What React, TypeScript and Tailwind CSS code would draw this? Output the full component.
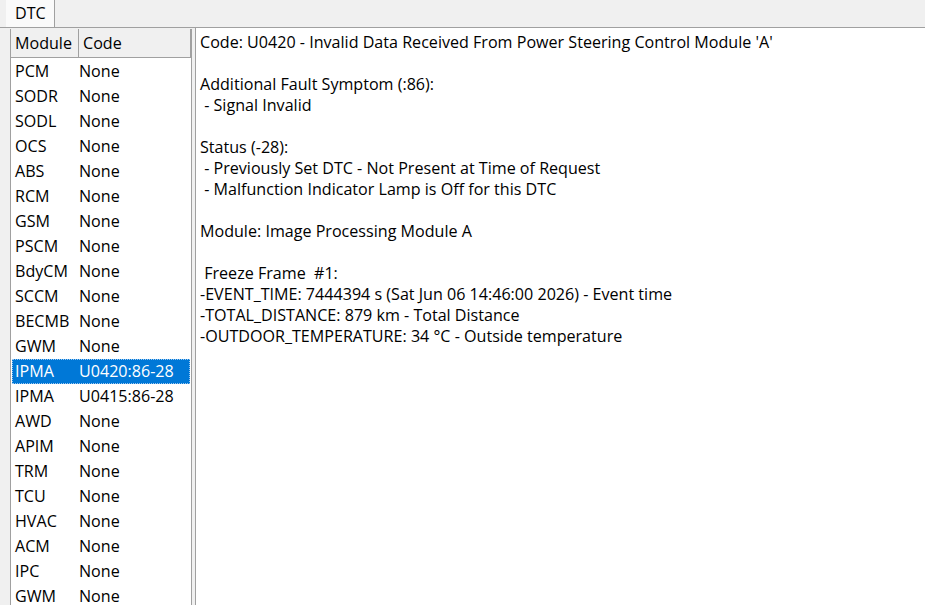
import React from 'react';

const rows: [string, string][] = [
  ['PCM', 'None'],
  ['SODR', 'None'],
  ['SODL', 'None'],
  ['OCS', 'None'],
  ['ABS', 'None'],
  ['RCM', 'None'],
  ['GSM', 'None'],
  ['PSCM', 'None'],
  ['BdyCM', 'None'],
  ['SCCM', 'None'],
  ['BECMB', 'None'],
  ['GWM', 'None'],
  ['IPMA', 'U0420:86-28'],
  ['IPMA', 'U0415:86-28'],
  ['AWD', 'None'],
  ['APIM', 'None'],
  ['TRM', 'None'],
  ['TCU', 'None'],
  ['HVAC', 'None'],
  ['ACM', 'None'],
  ['IPC', 'None'],
  ['GWM', 'None'],
];

const details = `Code: U0420 - Invalid Data Received From Power Steering Control Module 'A'

Additional Fault Symptom (:86):
 - Signal Invalid

Status (-28):
 - Previously Set DTC - Not Present at Time of Request
 - Malfunction Indicator Lamp is Off for this DTC

Module: Image Processing Module A

 Freeze Frame  #1:
-EVENT_TIME: 7444394 s (Sat Jun 06 14:46:00 2026) - Event time
-TOTAL_DISTANCE: 879 km - Total Distance
-OUTDOOR_TEMPERATURE: 34 °C - Outside temperature`;

export default function App() {
  const selected = 12;
  return (
    <div className="h-[605px] w-[925px] overflow-hidden bg-[#f0f0f0] text-[16.1px] text-black [font-family:'Open_Sans',Arial,sans-serif]">
      <div className="flex h-[28px] items-end border-b border-[#a0a0a0] pl-[6px]">
        <div className="flex h-[28px] w-[49px] items-center border-r border-[#a0a0a0] bg-[#fafafa] pl-[9px]">DTC</div>
      </div>
      <div className="flex h-[577px]">
        <div className="ml-[10px] mt-[1px] w-[182px] border-l border-r border-[#a0a0a0] bg-white">
          <div className="flex h-[29px] border-b border-[#a0a0a0] bg-[#f0f0f0]">
            <div className="flex w-[68px] items-center border-r border-[#a0a0a0] pl-[4px]">Module</div>
            <div className="flex flex-1 items-center border-r border-[#a0a0a0] pl-[4px]">Code</div>
          </div>
          <div className="pt-[1px]">
            {rows.map(([m, c], i) => (
              <div
                key={i}
                className={`mx-[1px] flex h-[25px] items-center ${
                  i === selected ? 'border border-dotted border-[#9ec8f0] bg-[#0078d7] text-white' : ''
                }`}
              >
                <div className={i === selected ? 'w-[66px] pl-[2px]' : 'w-[67px] pl-[3px]'}>{m}</div>
                <div>{c}</div>
              </div>
            ))}
          </div>
        </div>
        <div className="ml-[3px] flex-1 border-l border-[#a0a0a0] bg-white pl-[4px] pt-[4px] leading-[21px] whitespace-pre">
          {details}
        </div>
      </div>
    </div>
  );
}
